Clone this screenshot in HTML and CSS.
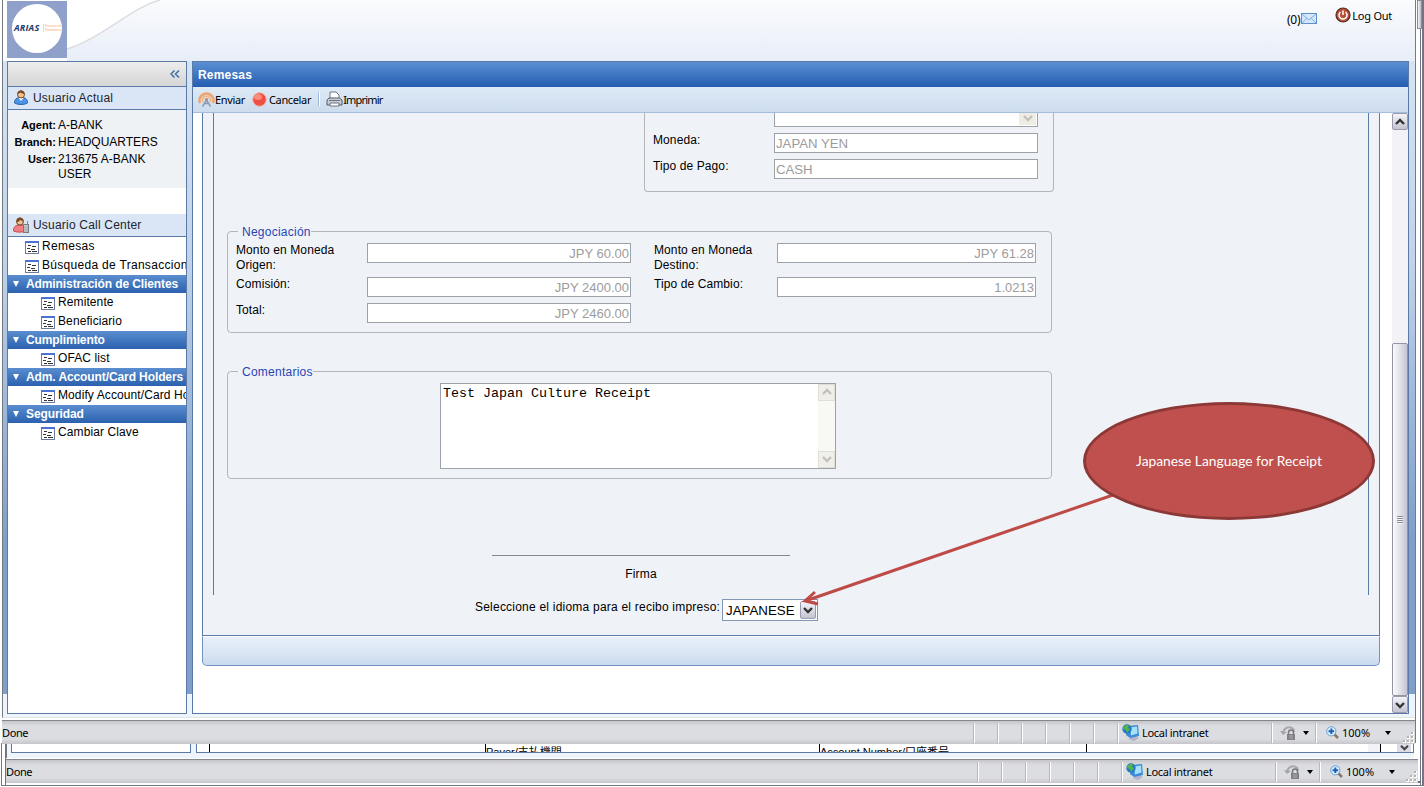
FILE: index.html
```html
<!DOCTYPE html>
<html lang="es">
<head>
  <meta charset="UTF-8">
  <title>Remesas</title>
  <link rel="stylesheet" href="styles.css">
</head>
<body>

  <!-- shared icons -->
  <svg class="defs" width="0" height="0">
    <symbol id="form" viewBox="0 0 14 13">
      <rect x=".5" y=".5" width="13" height="12" fill="#fff" stroke="#6b7c9e"/>
      <rect width="14" height="2" fill="#4a72d4"/>
      <path d="M3 4.500h3M7 5.500h4M2 7.500h3M6 8.500h4M3 10.500h3M7 10.500h5" stroke="#333" stroke-width="1"/>
    </symbol>
    <symbol id="up" viewBox="0 0 10 8"><path d="M1 6l4-4 4 4" fill="none" stroke="currentColor" stroke-width="2.4"/></symbol>
    <symbol id="down" viewBox="0 0 10 8"><path d="M1 2l4 4 4-4" fill="none" stroke="currentColor" stroke-width="2.4"/></symbol>
    <symbol id="intranet" viewBox="0 0 18 17">
      <path d="M8 12l7-2v3l2 1-5 3-6-2 3-1z" fill="#b4b2cc"/>
      <path d="M5 2l11-1 1 11-9 2-4-3z" fill="#3c8ad8"/>
      <path d="M8 3.500l7-1 .5 7-6.500 2z" fill="#a5e2fa"/>
      <circle cx="5" cy="5" r="4.700" fill="#2479c9"/>
      <path d="M1 4c1-3 4-4 6-3L6 4l2 1-3 4-1-3-3-1z" fill="#54b548"/>
    </symbol>
    <symbol id="protect" viewBox="0 0 16 15">
      <path d="M3 9C3 4 7 1 12 3c2 1 2 3 2 4" fill="none" stroke="#a9a9ae" stroke-width="2"/>
      <path d="M0 6l3 4 4-3z" fill="#a3a3a8"/>
      <path d="M8.500 9V7.500a2.500 2.500 0 015 0V9" fill="none" stroke="#77777c" stroke-width="1.500"/>
      <rect x="7" y="9" width="8" height="6" fill="#808086"/>
      <path d="M9 11h4M9 13h4" stroke="#bbb" stroke-width=".8"/>
    </symbol>
    <symbol id="zoom" viewBox="0 0 13 13">
      <path d="M8 8l4 4" stroke="#8d7465" stroke-width="2.500"/>
      <circle cx="5.300" cy="5.300" r="4.600" fill="#d9f0ff" stroke="#6b9fd4"/>
      <path d="M5.300 2.500v5.600M2.500 5.300h5.600" stroke="#1f62b5" stroke-width="2"/>
    </symbol>
    <symbol id="grip" viewBox="0 0 12 12">
      <path d="M8 0h3v3H8zM4 4h3v3H4zM8 4h3v3H8zM0 8h3v3H0zM4 8h3v3H4zM8 8h3v3H8z" fill="#fff"/>
      <path d="M8 0h2v2H8zM4 4h2v2H4zM8 4h2v2H8zM0 8h2v2H0zM4 8h2v2H4zM8 8h2v2H8z" fill="#b3b3b0"/>
    </symbol>
  </svg>

  <div class="desktop">

    <!-- window behind, only its bottom strip shows -->
    <div class="back-window">
      <div class="back-thumb"></div>
      <div class="back-page">
        <div class="back-side"></div>
        <div class="back-main">
          <div class="cell cell-blank"></div>
          <div class="cell cell-payer">Payer/支払機関</div>
          <div class="cell cell-account">Account Number/口座番号</div>
          <div class="cell cell-rest"></div>
          <div class="cell cell-end"></div>
          <div class="back-scroll"><svg width="9" height="7"><use href="#down"/></svg></div>
        </div>
      </div>
      <div class="statusbar">
        <span class="done">Done</span>
        <i class="sep"></i><i class="sep"></i><i class="sep"></i><i class="sep"></i><i class="sep"></i><i class="sep"></i>
        <span class="zone"><svg width="18" height="17"><use href="#intranet"/></svg>Local intranet</span>
        <span class="protected"><svg width="16" height="15"><use href="#protect"/></svg><b class="caret"></b></span>
        <span class="zoom"><svg width="13" height="13"><use href="#zoom"/></svg><em>100%</em><b class="caret"></b></span>
        <svg class="grip" width="12" height="12"><use href="#grip"/></svg>
      </div>
    </div>

    <div class="window">
      <div class="page">
        <header class="header">
          <svg class="swoosh" width="170" height="61" viewBox="0 0 170 61">
            <path d="M0 0H157C130 7 97 39 64 49V61H0z" fill="#fff"/>
            <path d="M64 49C97 39 130 7 157 0" fill="none" stroke="#dcdde0" stroke-width="1.500"/>
          </svg>
          <div class="logo">
            <div class="logo-disc"><b>ARIAS</b><span>Financial<br>Solutions</span></div>
          </div>
          <div class="session">
            <span class="mail">(0)<svg width="17" height="12" viewBox="0 0 17 12">
              <rect x=".5" y=".5" width="15" height="10" fill="#d4e7fb" stroke="#5f8fcb"/>
              <path d="M1 1l7 6 7-6M1 10l5-5M15 10l-5-5" fill="none" stroke="#86aede"/>
            </svg></span>
            <span class="logout"><svg width="16" height="16" viewBox="0 0 16 16">
              <circle cx="8" cy="8" r="7" fill="#b94f35" stroke="#54291f" stroke-width="1.200"/>
              <path d="M5.500 5a4 4 0 105 0M8 3.500V8" fill="none" stroke="#fff" stroke-width="1.500"/>
            </svg>Log Out</span>
          </div>
        </header>

        <div class="columns">
          <nav class="sidebar">
            <div class="collapse"><svg width="10" height="8" viewBox="0 0 10 8"><path d="M4.500 .5L1 4l3.500 3.500M9 .5L5.500 4 9 7.500" fill="none" stroke="#3d6fa8" stroke-width="1.500"/></svg></div>
            <div class="side-title">
              <svg width="15" height="15" viewBox="0 0 15 15">
                <path d="M1 13c0-4 2-5.500 6.500-5.500S14 9 14 13c-3 2-10 2-13 0z" fill="#4b94e8" stroke="#2b66b4"/>
                <path d="M5 8l2.500 3L10 8z" fill="#fff"/>
                <circle cx="7.500" cy="4.500" r="3.500" fill="#f0c090" stroke="#7a4a22"/>
                <path d="M4 4c0-5 7-5 7 0-2 0-3-1-4-1.500C6 3 5 4 4 4z" fill="#7a4a22"/>
              </svg>
              Usuario Actual
            </div>
            <dl class="agent">
              <dt>Agent:</dt><dd>A-BANK</dd>
              <dt>Branch:</dt><dd>HEADQUARTERS</dd>
              <dt>User:</dt><dd>213675 A-BANK USER</dd>
            </dl>
            <div class="side-title">
              <svg width="16" height="16" viewBox="0 0 16 16">
                <path d="M.5 14c0-4 2-6 6-6s6 2 6 6c-3 1.500-9 1.500-12 0z" fill="#ef7f80" stroke="#c2484a"/>
                <circle cx="7" cy="4.500" r="3.500" fill="#f0c090" stroke="#7a4a22"/>
                <path d="M3.500 5c-.5-6 7-6 7 0-2-1-2-2-3.500-2-1 2-2 2-3.500 2z" fill="#7a4a22"/>
                <path d="M14.500 4v4" stroke="#888"/>
                <rect x="10.500" y="7.500" width="5" height="8" fill="#c9ccd0" stroke="#77797d"/>
                <path d="M11.500 10h3M11.500 12h3M11.500 14h3" stroke="#77797d" stroke-dasharray="1"/>
              </svg>
              Usuario Call Center
            </div>
            <ul class="menu">
              <li class="top"><svg width="14" height="13"><use href="#form"/></svg>Remesas</li>
              <li class="top"><svg width="14" height="13"><use href="#form"/></svg>Búsqueda de Transaccion</li>
              <li class="group">Administración de Clientes</li>
              <li><svg width="14" height="13"><use href="#form"/></svg>Remitente</li>
              <li><svg width="14" height="13"><use href="#form"/></svg>Beneficiario</li>
              <li class="group">Cumplimiento</li>
              <li><svg width="14" height="13"><use href="#form"/></svg>OFAC list</li>
              <li class="group">Adm. Account/Card Holders</li>
              <li><svg width="14" height="13"><use href="#form"/></svg>Modify Account/Card Ho</li>
              <li class="group">Seguridad</li>
              <li><svg width="14" height="13"><use href="#form"/></svg>Cambiar Clave</li>
            </ul>
          </nav>

          <main class="content">
            <h1>Remesas</h1>
            <div class="toolbar">
              <span><svg width="17" height="16" viewBox="0 0 17 16">
                <path d="M2 12a7 7 0 1113 0" fill="none" stroke="#eda56f" stroke-width="2.500"/>
                <path d="M5 11a4 4 0 117 0" fill="none" stroke="#f0b78a" stroke-width="1.800"/>
                <circle cx="8.500" cy="8.500" r="1.500" fill="#e27a3f"/>
                <path d="M8.500 9l-4 6.500M8.500 9l4 6.500M6.500 12.500h4" fill="none" stroke="#8b9db4" stroke-width="1.500"/>
              </svg>Enviar</span>
              <span class="cancel"><svg width="15" height="15" viewBox="0 0 15 15">
                <circle cx="7.500" cy="7.500" r="6.700" fill="#ee4f43" stroke="#f2a39b"/>
                <ellipse cx="6" cy="5" rx="4" ry="3" fill="#f98c7c"/>
              </svg>Cancelar</span>
              <i class="divider"></i>
              <span class="print"><svg width="17" height="16" viewBox="0 0 17 16">
                <path d="M4 8V1h6l3 3v4z" fill="#fff" stroke="#6d7685"/>
                <path d="M1 14V9l2-2h10.500L16 9v5z" fill="#c9cdd5" stroke="#535b68"/>
                <path d="M4 12h9v3H4z" fill="#fff" stroke="#6d7685"/>
                <path d="M3 9.500h11" stroke="#6d7685"/>
              </svg>Imprimir</span>
            </div>

            <div class="viewport">
              <div class="document">
                <div class="panel">
                  <div class="form">
                    <div class="payment">
                      <span></span>
                      <div class="combo-bottom"><i><svg width="10" height="8"><use href="#down"/></svg></i></div>
                      <label>Moneda:</label><div class="field">JAPAN YEN</div>
                      <label>Tipo de Pago:</label><div class="field">CASH</div>
                    </div>

                    <fieldset class="negotiation">
                      <legend>Negociación</legend>
                      <div class="amounts">
                        <label>Monto en Moneda<br>Origen:</label><div class="field num">JPY 60.00</div>
                        <label class="second">Monto en Moneda<br>Destino:</label><div class="field num">JPY 61.28</div>
                        <label>Comisión:</label><div class="field num">JPY 2400.00</div>
                        <label class="second">Tipo de Cambio:</label><div class="field num">1.0213</div>
                        <label>Total:</label><div class="field num">JPY 2460.00</div>
                      </div>
                    </fieldset>

                    <fieldset class="comments">
                      <legend>Comentarios</legend>
                      <div class="textarea">
                        <span>Test Japan Culture Receipt</span>
                        <div class="textarea-scroll">
                          <i><svg width="10" height="8"><use href="#up"/></svg></i>
                          <i><svg width="10" height="8"><use href="#down"/></svg></i>
                        </div>
                      </div>
                    </fieldset>

                    <div class="signature">Firma</div>
                  </div>
                  <div class="language">
                    <span>Seleccione el idioma para el recibo impreso:</span>
                    <div class="select">JAPANESE<i><svg width="10" height="8"><use href="#down"/></svg></i></div>
                  </div>
                </div>
                <div class="panel-foot"></div>
              </div>
              <div class="scrollbar">
                <i class="arrow"><svg width="10" height="8"><use href="#up"/></svg></i>
                <div class="track"></div>
                <div class="thumb"><b></b></div>
                <i class="arrow"><svg width="10" height="8"><use href="#down"/></svg></i>
              </div>
            </div>
          </main>
        </div>
      </div>

      <div class="statusbar">
        <span class="done">Done</span>
        <i class="sep"></i><i class="sep"></i><i class="sep"></i><i class="sep"></i><i class="sep"></i><i class="sep"></i>
        <span class="zone"><svg width="18" height="17"><use href="#intranet"/></svg>Local intranet</span>
        <span class="protected"><svg width="16" height="15"><use href="#protect"/></svg><b class="caret"></b></span>
        <span class="zoom"><svg width="13" height="13"><use href="#zoom"/></svg><em>100%</em><b class="caret"></b></span>
        <svg class="grip" width="12" height="12"><use href="#grip"/></svg>
      </div>
    </div>

    <!-- callout -->
    <svg class="arrow-line" width="320" height="120" viewBox="0 0 320 120">
      <path d="M314 4L9 109" stroke="#be4b48" stroke-width="3"/>
      <path d="M16 101L6 110l13 3" fill="none" stroke="#be4b48" stroke-width="3"/>
    </svg>
    <div class="callout">Japanese Language for Receipt</div>
  </div>

</body>
</html>
```
FILE: styles.css
```css
* {
  box-sizing: border-box;
}

body {
  margin: 0;
  background: #fff;
  font-family: "Liberation Sans", Arial, sans-serif;
  font-size: 12px;
  line-height: 15px;
  color: #000;
  overflow: hidden;
}

svg {
  flex: none;
}

.defs {
  position: absolute;
}

.desktop {
  position: relative;
  width: 1424px;
  height: 787px;
  overflow: hidden;
}

/* ---- windows ---- */
.window {
  position: absolute;
  left: 0;
  top: 0;
  width: 1416px;
  height: 743px;
  padding-left: 2px;
  background: #fff;
  border-right: 1px solid #777988;
}

.page {
  height: 718px;
  padding-right: 3px;
  border-left: 1px solid #747a82;
  border-bottom: 1px solid #dfe6e6;
  background: linear-gradient(#d6e4f2 0, #c0d3e9 200px, #7f9fca 480px, #7f9fca 633px, #eef4fc 633px) 0 61px no-repeat, #eef4fc;
}

.back-window {
  position: absolute;
  left: 1px;
  top: 0;
  width: 1423px;
  height: 786px;
  padding-left: 4px;
  display: flex;
  flex-direction: column;
  border: solid #73757f;
  border-width: 0 2px 1px 1px;
  background: #fff;
  box-shadow: inset 3px 0 0 #fff, inset 4px 0 0 #70728a, inset -1px 0 0 #fff, inset -2px 0 0 #70728a, inset 0 -2px 0 #fff, inset 0 -4px 0 #70728a;
}

.back-thumb {
  width: 5px;
  height: 29px;
  margin-left: auto;
  background: linear-gradient(90deg, #f6f6fa, #b9b9c9);
  border: 1px solid #8b8b9d;
}

.back-page {
  margin-top: 714px;
  height: 15px;
  margin-right: 8px;
  padding-left: 4px;
  display: flex;
  border-left: 1px solid #747a82;
  background: #eef4fc;
}

.back-side {
  width: 180px;
  height: 10px;
  margin-right: 5px;
  border: solid #5c7aa6;
  border-width: 0 1px 1px;
  background: #fff;
}

.back-main {
  flex: 1;
  height: 10px;
  display: flex;
  padding-left: 12px;
  border: solid #5c7aa6;
  border-width: 0 1px 1px;
  background: #fff;
  overflow: hidden;
  font-size: 11px;
  line-height: 19px;
}

.cell {
  height: 9px;
  border-left: 1px solid #000;
  font-family: "Liberation Sans", "Noto Sans CJK JP", sans-serif;
  white-space: nowrap;
}

.cell-blank {
  width: 276px;
}

.cell-payer {
  width: 334px;
}

.cell-account {
  width: 267px;
}

.cell-rest {
  width: 294px;
  border-right: 12px solid #f3f3f7;
}

.cell-end {
  width: 17px;
}

.back-scroll {
  width: 14px;
  text-align: center;
  line-height: 8px;
  background: #dcdce6;
  color: #444;
}

/* ---- status bar ---- */
.statusbar {
  height: 24px;
  margin-top: 2px;
  display: flex;
  align-items: center;
  border-top: 1px solid #85858c;
  background: linear-gradient(#c6c6ca, #dcdde1 5px, #dcdde0 18px, #c5c5cb);
  font: 11px "Noto Sans", Tahoma, sans-serif;
}

.back-window .statusbar {
  margin-right: 4px;
  margin-top: 1px;
}

.done {
  width: 971px;
  letter-spacing: -.4px;
}

.sep {
  width: 24px;
  height: 20px;
  border-left: 1px solid #b9b9bd;
  box-shadow: inset 1px 0 0 #fff;
}

.zone,
.protected,
.zoom {
  display: flex;
  align-items: center;
  height: 20px;
  padding-left: 4px;
  border-left: 1px solid #b9b9bd;
  box-shadow: inset 1px 0 0 #fff;
}

.zone {
  width: 154px;
  gap: 2px;
  letter-spacing: -.3px;
}

.protected {
  width: 44px;
  padding-left: 8px;
}

.protected .caret {
  margin-left: 7px;
}

.zoom {
  width: 82px;
  padding-left: 10px;
}

.zoom em {
  width: 43px;
  margin-left: 3px;
  font-style: normal;
}

.caret {
  border: 3px solid transparent;
  border-top: 4px solid #000;
  border-bottom: 0;
}

.grip {
  align-self: flex-end;
  margin-left: auto;
}

/* ---- header ---- */
.header {
  position: relative;
  height: 61px;
  margin-right: -3px;
  padding: 1px 23px 0 4px;
  display: flex;
  justify-content: space-between;
  background: linear-gradient(#fafbfd, #e8eef8);
}

.swoosh {
  position: absolute;
  left: 0;
  top: 0;
}

.logo {
  position: relative;
  width: 60px;
  height: 57px;
  padding: 3px 5px;
  background: #8fa0cb;
}

.logo-disc {
  width: 50px;
  height: 49px;
  display: flex;
  align-items: center;
  padding: 0 0 2px 2px;
  border-radius: 50%;
  background: #fff;
}

.logo-disc b {
  width: 29px;
  font: italic bold 9px "Open Sans", sans-serif;
  letter-spacing: .2px;
  color: #1c3c74;
}

.logo-disc span {
  padding-left: 1px;
  font-size: 4px;
  line-height: 4px;
  color: #f2b27c;
  border-left: 1px solid #f6d3b3;
}

.session {
  display: flex;
  font: 11px/15px "Noto Sans", Tahoma, sans-serif;
}

.session span {
  display: flex;
  align-items: center;
  height: 16px;
}

.mail {
  margin: 10px 17px 0 0;
  gap: 1px;
  font-size: 12px;
  letter-spacing: -.2px;
}

.logout {
  margin-top: 6px;
  gap: 1px;
  letter-spacing: -.25px;
}

/* ---- columns ---- */
.columns {
  height: 653px;
  padding-left: 4px;
  display: flex;
  gap: 5px;
}

.sidebar,
.content {
  border: 1px solid #5c7aa6;
  background: #fff;
  overflow: hidden;
}

.sidebar {
  width: 180px;
  flex: none;
}

.collapse {
  height: 25px;
  padding: 0 6px;
  display: flex;
  align-items: center;
  justify-content: flex-end;
  border-bottom: 1px solid #5c7aa6;
  background: linear-gradient(#ededed, #d5d5d5);
}

.side-title {
  height: 23px;
  display: flex;
  align-items: center;
  padding: 1px 0 0 5px;
  border-bottom: 1px solid #5c7aa6;
  background: #dae6f6;
  color: #20242c;
  letter-spacing: .2px;
}

.side-title svg {
  width: 16px;
  margin: -2px 4px 0 0;
}

.agent {
  height: 78px;
  margin: 0 0 26px;
  padding: 8px 20px 0 0;
  display: grid;
  grid-template-columns: 48px 1fr;
  grid-auto-rows: max-content;
  row-gap: 2px;
  column-gap: 2px;
  background: #eff2f5;
}

.agent dt {
  text-align: right;
  font-size: 11px;
  line-height: 14px;
  font-weight: bold;
}

.agent dd {
  margin: 0;
}

.menu {
  margin: 0;
  padding: 0;
  list-style: none;
}

.menu li {
  height: 19px;
  padding: 0 0 1px 33px;
  display: flex;
  align-items: center;
  gap: 3px;
  white-space: nowrap;
  letter-spacing: .1px;
}

.menu li svg {
  margin-top: 2px;
}

.menu li.top {
  padding-left: 17px;
  letter-spacing: .3px;
}

.menu li.group {
  height: 18px;
  padding: 0 0 0 5px;
  gap: 7px;
  background: linear-gradient(#5a8ed0, #2b61ae);
  color: #fff;
  font-weight: bold;
  letter-spacing: -.1px;
}

.menu li.group::before {
  content: "";
  border: 3.500px solid transparent;
  border-top: 6px solid #fff;
  border-bottom: 0;
}

/* ---- content ---- */
.content {
  width: 1217px;
  display: flex;
  flex-direction: column;
}

.content h1 {
  height: 25px;
  margin: 0;
  padding: 0 5px;
  background: linear-gradient(#5a8fd3, #255db0);
  color: #fff;
  font-size: 12px;
  line-height: 26px;
  letter-spacing: .2px;
}

.toolbar {
  height: 26px;
  padding: 0 5px 1px;
  display: flex;
  align-items: center;
  border-bottom: 1px solid #a5bddc;
  background: linear-gradient(#dde9f6, #cddcee);
  font: 11px "Noto Sans", Tahoma, sans-serif;
  letter-spacing: -.35px;
}

.toolbar span {
  display: flex;
  align-items: center;
}

.cancel {
  margin-left: 7px;
}

.cancel svg {
  margin-right: 2px;
}

.print {
  letter-spacing: -.8px;
}

.divider {
  width: 2px;
  height: 14px;
  margin: 0 6px 0 7px;
  background: linear-gradient(90deg, #9db8d9 50%, #fff 50%);
}

.viewport {
  flex: 1;
  display: flex;
  justify-content: space-between;
  padding: 0 0 0 9px;
}

.document {
  width: 1178px;
}

.panel {
  height: 523px;
  padding: 0 10px;
  border: solid #5c7aa6;
  border-width: 0 1px 1px;
  background: #eff3f7;
}

.panel-foot {
  height: 30px;
  border: 1px solid #7394c1;
  border-top: 1px solid #fff;
  border-radius: 0 0 5px 5px;
  background: linear-gradient(#e8eff9, #d9e5f3 60%, #c9daf0);
}

.form {
  height: 482px;
  padding-left: 13px;
  border: solid #5c7aa6;
  border-width: 0 1px;
}

.payment {
  width: 410px;
  height: 79px;
  margin-left: 417px;
  padding-left: 8px;
  display: grid;
  grid-template-columns: 121px 264px;
  grid-template-rows: 14px 20px 20px;
  row-gap: 6px;
  border: 1px solid #b4b6ba;
  border-top: 0;
  border-radius: 0 0 4px 4px;
}

label {
  letter-spacing: .1px;
}

.combo-bottom {
  display: flex;
  justify-content: flex-end;
  padding: 0 1px 1px;
  border: 1px solid #9da2aa;
  border-top: 0;
  background: #fff;
}

.combo-bottom i {
  width: 17px;
  text-align: center;
  line-height: 10px;
  background: #eeede5;
  color: #c3c2b8;
}

.field {
  height: 20px;
  padding: 0 1px;
  border: 1px solid #9da2aa;
  background: #fff;
  color: #9c9c9c;
  font-size: 13.200px;
  line-height: 20px;
}

.num {
  text-align: right;
  font-size: 13px;
}

fieldset {
  width: 825px;
  min-width: 0;
  margin: 0;
  padding: 4px 8px 0;
  border: 1px solid #b4b6ba;
  border-radius: 4px;
}

legend {
  height: 15px;
  margin-left: 2px;
  padding: 1px 0 0 4px;
  color: #2a43b5;
  letter-spacing: .25px;
}

.negotiation {
  height: 109px;
  margin-top: 32px;
}

.amounts {
  display: grid;
  grid-template-columns: 131px 264px 146px 259px;
  grid-template-rows: 34px 26px 20px;
}

.second {
  padding-left: 23px;
}

.comments {
  height: 115px;
  margin-top: 31px;
}

.textarea {
  width: 396px;
  height: 86px;
  margin-left: 204px;
  padding-left: 2px;
  display: flex;
  justify-content: space-between;
  border: 1px solid #9da2aa;
  background: #fff;
  font: 13.333px/20px "Liberation Mono", "Courier New", monospace;
}

.textarea-scroll {
  width: 17px;
  display: flex;
  flex-direction: column;
  justify-content: space-between;
  background: #f8f8f5;
}

.textarea-scroll i {
  height: 17px;
  text-align: center;
  line-height: 15px;
  border: 1px solid #e0dfd6;
  background: #f0efe9;
  color: #c3c2b8;
}

.signature {
  width: 298px;
  margin: 76px 0 0 265px;
  padding-top: 11px;
  border-top: 1px solid #85898f;
  text-align: center;
  letter-spacing: .2px;
}

.language {
  display: flex;
  gap: 2px;
  padding: 4px 0 0 262px;
}

.language span {
  width: 245px;
  padding-top: 1px;
  white-space: nowrap;
  letter-spacing: .22px;
}

.select {
  width: 96px;
  height: 22px;
  padding: 1px 1px 1px 3px;
  display: flex;
  justify-content: space-between;
  border: 1px solid #8198b5;
  background: #fff;
  font-size: 13.333px;
  line-height: 20px;
}

.select i,
.arrow {
  width: 16px;
  display: flex;
  align-items: center;
  justify-content: center;
  border: 1px solid #9a9cae;
  border-radius: 2px;
  background: linear-gradient(#f4f4f8, #c3c4d2);
  color: #333;
}

.scrollbar {
  width: 16px;
  display: flex;
  flex-direction: column;
  background: #f3f3f7;
}

.arrow {
  height: 17px;
  flex: none;
}

.track {
  height: 213px;
}

.thumb {
  flex: 1;
  display: flex;
  align-items: center;
  justify-content: center;
  border: 1px solid #9293a3;
  border-radius: 2px;
  background: linear-gradient(90deg, #fbfbfd, #dcdce6 60%, #c5c5d3);
}

.thumb b {
  width: 6px;
  height: 8px;
  background: repeating-linear-gradient(#8b8c9a 0 1px, #f5f5f8 1px 2px);
}

/* ---- callout ---- */
.arrow-line {
  position: absolute;
  left: 799px;
  top: 491px;
}

.callout {
  position: absolute;
  left: 1083px;
  top: 402px;
  width: 292px;
  height: 118px;
  border: 3px solid #8c3836;
  border-radius: 50%;
  background: #c0504d;
  color: #fff;
  font: 13.800px/112px Lato, Calibri, sans-serif;
  text-align: center;
}
```
